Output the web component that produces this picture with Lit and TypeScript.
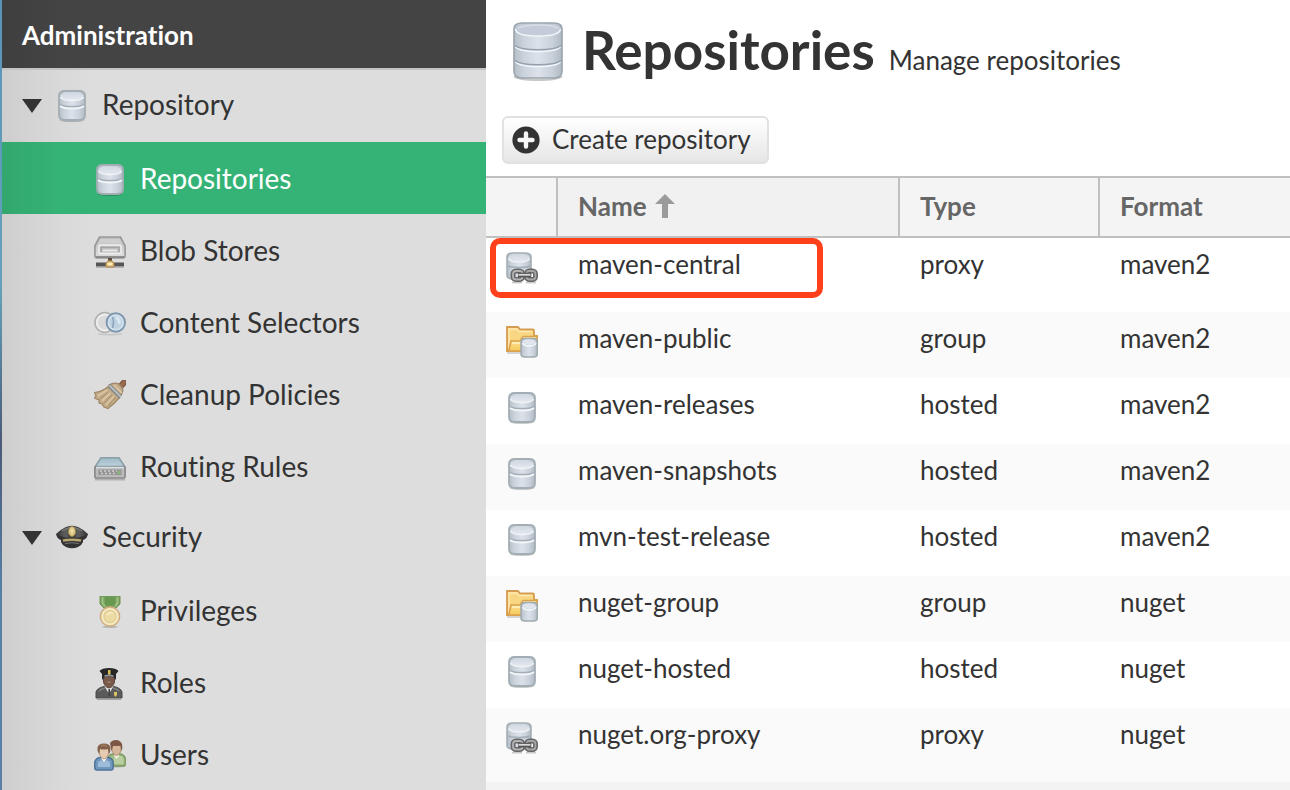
import { LitElement, html, css, svg, nothing, TemplateResult } from "lit";
import { customElement, property, state } from "lit/decorators.js";

type IconName =
  | "database" | "database-large" | "proxy" | "group" | "drive" | "selectors"
  | "broom" | "router" | "cap" | "medal" | "officer" | "users" | "plus" | "sort";

const metal = svg`
  <linearGradient id="metal" x1="0" x2="1" y1="0" y2="0">
    <stop offset="0" stop-color="#b4bfc8"/><stop offset=".2" stop-color="#cad2db"/>
    <stop offset=".5" stop-color="#dce2ea"/><stop offset=".8" stop-color="#c8d0da"/>
    <stop offset="1" stop-color="#b0bac3"/>
  </linearGradient>
  <linearGradient id="lid" x1="0" x2="0" y1="0" y2="1">
    <stop offset="0" stop-color="#d0d7e0"/><stop offset="1" stop-color="#e3e8ee"/>
  </linearGradient>`;

const glyphs: Record<IconName, TemplateResult> = {
  database: svg`
    <defs>${metal}</defs>
    <path d="M4 29.500Q6 31.400 16 31.400T28 29.500" fill="none" stroke="#000" stroke-opacity=".2" stroke-width="1.400"/>
    <path d="M3 6Q3 1 9 1H23Q29 1 29 6V25Q29 30 23 30H9Q3 30 3 25Z" fill="url(#metal)" stroke="#a3aeb4" stroke-width="1.800"/>
    <ellipse cx="16" cy="6" rx="11.500" ry="4" fill="url(#lid)"/>
    <path d="M4.500 7Q6 10.500 16 10.500T27.500 7" fill="none" stroke="#eff2f6" stroke-width="1.800"/>
    <path d="M3.500 14Q6 16.600 16 16.600T28.500 14" fill="none" stroke="#a3aeb8" stroke-width="1.600"/>
    <path d="M4 16Q7 18.500 16 18.500T28 16" fill="none" stroke="#f2f5f8" stroke-width="1.800"/>`,
  "database-large": svg`
    <defs>${metal}</defs>
    <path d="M6 56Q10 60 30 60T54 56" fill="none" stroke="#000" stroke-opacity=".22" stroke-width="2"/>
    <path d="M6 9Q6 3 14 3H46Q54 3 54 9V51Q54 58 46 58H14Q6 58 6 51Z" fill="url(#metal)" stroke="#99a4ad" stroke-width="1.600"/>
    <path d="M7.500 9Q9 4 16 4H44Q51 4 52.500 9Q52 16 30 16T7.500 9Z" fill="#c3cbd8"/>
    <path d="M10 8Q16 5 30 5T50 8" fill="none" stroke="#d8dee6" stroke-width="1.400"/>
    <path d="M7.500 9Q8 16 30 16T52.500 9M7.500 27Q12 31.500 30 31.500T52.500 27M7.500 42Q12 46.500 30 46.500T52.500 42" fill="none" stroke="#f3f6fa" stroke-width="1.600"/>
    <path d="M7 25.500Q12 29.800 30 29.800T53 25.500M7 40.500Q12 44.800 30 44.800T53 40.500" fill="none" stroke="#95a0ac" stroke-width="1.500"/>`,
  proxy: svg`
    <defs>${metal}</defs>
    <path d="M1 5Q1 1 7 1H19Q25 1 25 5V23Q25 27 19 27H7Q1 27 1 23Z" fill="url(#metal)" stroke="#a3aeb4" stroke-width="1.600"/>
    <ellipse cx="13" cy="5.500" rx="10.500" ry="3.600" fill="url(#lid)"/>
    <path d="M2.500 6.500Q4 10 13 10T23.500 6.500" fill="none" stroke="#eff2f6" stroke-width="1.600"/>
    <path d="M2 14Q5 15.500 13 15.500T24 14" fill="none" stroke="#a3aeb8" stroke-width="1.400"/>
    <path d="M6 30.800H16M20 30.800H30" stroke="#000" stroke-opacity=".2" stroke-width="1.600"/>
    <g fill="none">
      <rect x="7" y="19" width="9.500" height="8.500" rx="3" stroke="#666" stroke-width="5"/>
      <rect x="20.500" y="19" width="9" height="8.500" rx="3" stroke="#666" stroke-width="5"/>
      <rect x="7" y="19" width="9.500" height="8.500" rx="3" stroke="#b2b2b2" stroke-width="1.800"/>
      <rect x="20.500" y="19" width="9" height="8.500" rx="3" stroke="#a6a6a6" stroke-width="1.800"/>
      <path d="M12 23H25" stroke="#555" stroke-width="4.600"/>
      <path d="M12.500 22.800H24.500" stroke="#d9d9d9" stroke-width="1.800"/>
    </g>`,
  group: svg`
    <defs>${metal}
      <linearGradient id="paper" x1="0" x2="0" y1="0" y2="1"><stop offset="0" stop-color="#ffe9a3"/><stop offset="1" stop-color="#f5c95c"/></linearGradient>
    </defs>
    <path d="M1 27H16" stroke="#000" stroke-opacity=".15" stroke-width="2"/>
    <path d="M1 25V1H12L14 3.500H26.500Q28 3.500 28 5V10H31V14L28 25Z" fill="#f8d682" stroke="#d59b50" stroke-width="1.800"/>
    <path d="M3 22V3H11L13 5.500H26" fill="none" stroke="#fdeab2" stroke-width="1.400"/>
    <path d="M3 24L5 15H14L17 10.500H31V14L28 25H3Z" fill="url(#paper)" stroke="#dba24e" stroke-width="1.600"/>
    <path d="M6 17H15L18 12.500H29" fill="none" stroke="#fff3c5" stroke-width="1.400"/>
    <path d="M15 16Q15 12.500 19 12.500H27Q31.300 12.500 31.300 16V28Q31.300 31 27 31H19Q15 31 15 28Z" fill="url(#metal)" stroke="#9fa9ae" stroke-width="1.500"/>
    <ellipse cx="23.200" cy="16" rx="6.500" ry="2.500" fill="#dfe5ed"/>
    <path d="M16.500 17Q17.500 20 23.200 20T30 17" fill="none" stroke="#f3f6f9" stroke-width="1.500"/>`,
  drive: svg`
    <defs><linearGradient id="case" x1="0" x2="0" y1="0" y2="1"><stop offset="0" stop-color="#bdbdbd"/><stop offset="1" stop-color="#dedede"/></linearGradient></defs>
    <path d="M.900 10L5.500 1H26.500L31.100 10V19Q31.100 22 29 22H3Q.900 22 .900 19Z" fill="url(#case)" stroke="#999" stroke-width="1.700"/>
    <path d="M4 7L7 3H25L28 7Z" fill="#cfcfcf"/>
    <path d="M2 21H30" stroke="#858585" stroke-width="1.800"/>
    <rect x="5" y="9" width="22" height="8.500" rx="1" fill="#c6c6c6" stroke="#f0f0f0" stroke-width="1.400"/>
    <path d="M7 16V11.500H25V16" fill="none" stroke="#a3a3a3" stroke-width="1.400"/>
    <path d="M9 14.500H23" stroke="#ebebeb" stroke-width="1.500"/>
    <path d="M16 22V27" stroke="#5a5040" stroke-width="4"/>
    <path d="M2 28.500H30" stroke="#555" stroke-width="4"/><path d="M2 31H30" stroke="#9a9a9a" stroke-width="1.200"/>
    <path d="M12 31V27L14 25H18L20 27V31Z" fill="#e6c384" stroke="#aa8348" stroke-width="1"/><path d="M14 27H18V29H14Z" fill="#fff0c4"/>`,
  selectors: svg`
    <circle cx="10.800" cy="14.500" r="9.800" fill="#dadada" stroke="#b2b2b2" stroke-width="1.800"/>
    <circle cx="10.800" cy="14.500" r="8" fill="none" stroke="#efefef" stroke-width="1.800"/>
    <circle cx="21.800" cy="14.500" r="9.200" fill="#bdd1e0" stroke="#7f98b0" stroke-width="2"/>
    <circle cx="21.800" cy="14.500" r="7.300" fill="none" stroke="#d3e2ec" stroke-width="1.600"/>
    <path d="M18.500 9Q20.500 14 18.500 20" fill="none" stroke="#8ba4bb" stroke-width="1.600"/>
    <path d="M22 9.500Q25.500 11 25.500 16" fill="none" stroke="#d9e8f2" stroke-width="3"/>
    <path d="M4 26Q16 27.500 28 26" fill="none" stroke="#000" stroke-opacity=".1" stroke-width="1.400"/>`,
  broom: svg`
    <path d="M24 5.500L29 0H32V4L27.500 9Z" fill="#9a6b50" stroke="#7d5743" stroke-width="1.200"/>
    <path d="M15 5Q20 2 25 4L28.500 8Q30 12 25 18Z" fill="#c2aa88" stroke="#9b8467" stroke-width="1.200"/>
    <path d="M15 6Q8 12 .500 12.500L2 16L.500 18L5 20L5 23L8 24L10 27L14 28.500Q20 24 26 17Z" fill="#c4ad89" stroke="#a08767" stroke-width="1.200"/>
    <path d="M13 10L4 16M16 13L8 21M20 16L12 25" fill="none" stroke="#d9c4a1" stroke-width="1.800"/>
    <path d="M14.500 12L6 18.500M18 15L9.500 23.500M22 17L14 26" fill="none" stroke="#a38b69" stroke-width="1"/>
    <path d="M15 5.500L26.500 17" stroke="#868a8c" stroke-width="4"/><path d="M15.500 5.500L27 17" stroke="#c3c7c7" stroke-width="1.600"/>
    <path d="M20 5L28 13" stroke="#ddc7a6" stroke-width="1.600"/>`,
  router: svg`
    <defs><linearGradient id="top" x1="0" x2="0" y1="0" y2="1"><stop offset="0" stop-color="#9fb9c5"/><stop offset="1" stop-color="#c3dae7"/></linearGradient></defs>
    <path d="M.900 27.500H31.100" stroke="#000" stroke-opacity=".2" stroke-width="2"/>
    <path d="M1 15L7 5.700H25L31 15V17H1Z" fill="url(#top)" stroke="#8a9ea6" stroke-width="1.600"/>
    <rect x=".900" y="14.500" width="30.200" height="11.500" rx="1.500" fill="#bbb" stroke="#8a8a8a" stroke-width="1.700"/>
    <path d="M2 15.500H30" stroke="#d5e1e8" stroke-width="1.500"/>
    <rect x="4.500" y="17.500" width="23" height="5.500" fill="#949494"/>
    <path d="M6 19H23M7 21.500H22" stroke="#d0d0d0" stroke-width="1.300" stroke-dasharray="2 2"/>
    <circle cx="25" cy="20.500" r="1.800" fill="#86b67a"/>`,
  cap: svg`
    <defs><linearGradient id="felt" x1="0" x2="1" y1="0" y2="0"><stop offset="0" stop-color="#3d3d3d"/><stop offset=".3" stop-color="#606060"/><stop offset=".5" stop-color="#2a2a2a"/><stop offset=".7" stop-color="#606060"/><stop offset="1" stop-color="#3d3d3d"/></linearGradient></defs>
    <path d="M0 12Q4 8 9 5.500Q16 2 23 5.500Q28 8 32 12Q31 17 27 18V20Q26 23 22 25Q16 27.500 10 25Q6 23 5 20V18Q1 17 0 12Z" fill="#333"/>
    <path d="M1.500 12Q9 5.500 16 5.500T30.500 12Q26 16 16 16T1.500 12Z" fill="url(#felt)"/>
    <path d="M6 9Q9 6.500 14 5.500M26 9Q23 6.500 18 5.500" fill="none" stroke="#7b7b7b" stroke-width="1.500"/>
    <path d="M7 18.500Q16 17 25 18.500" fill="none" stroke="#b9a56e" stroke-width="2.400"/>
    <path d="M9 21.500Q16 20 23 21.500" fill="none" stroke="#777" stroke-width="1"/>
    <ellipse cx="16" cy="9.500" rx="3.600" ry="5" fill="#dbc684" stroke="#9a864e" stroke-width="1"/><ellipse cx="16" cy="9" rx="1.600" ry="2.500" fill="#eadba0"/>`,
  medal: svg`
    <path d="M6 0H26V8L22 12H10L6 8Z" fill="#7ba260" stroke="#6b9453" stroke-width="1"/>
    <path d="M11 1H21V9L19 11H13L11 9Z" fill="#679a50"/><path d="M8.500 1V7L11 10.500M23.500 1V7L21 10.500" fill="none" stroke="#a0c286" stroke-width="1.800"/>
    <ellipse cx="16" cy="30.800" rx="8" ry="1.200" fill="#000" fill-opacity=".17"/>
    <circle cx="16" cy="20.500" r="9.600" fill="#f5ebc2" stroke="#d0ad80" stroke-width="1.600"/>
    <circle cx="16" cy="20.500" r="6" fill="#ecdca3" stroke="#e2cc94" stroke-width="1.300"/>
    <path d="M13 19Q15 16 19 17" fill="none" stroke="#f6eac0" stroke-width="2"/>`,
  officer: svg`
    <path d="M2 30V24Q3 20 10 18.500H20Q27 20 28 24V30Z" fill="#5b5b5b" stroke="#494949" stroke-width="1"/>
    <path d="M3 31H27" stroke="#999" stroke-width="1.800"/><path d="M5 23Q7 21 11 20M25 23Q23 21 19 20" fill="none" stroke="#808080" stroke-width="1.400"/>
    <path d="M10.500 18L15 26L19.500 18Z" fill="#ededed"/><path d="M14.500 21H16L16.500 27L15.300 29L14 27Z" fill="#444"/>
    <path d="M9.500 8H20.500V14Q19 19.500 15 20Q11 19.500 9.500 14Z" fill="#79594a" stroke="#5f473d" stroke-width="1"/>
    <path d="M13 14H17" stroke="#94705f" stroke-width="2"/>
    <path d="M5.500 3Q8 0 15 0T24.500 3L22 6V12L20 9.500Q15 7.500 10 9.500L8 12V6Z" fill="#272727"/>
    <path d="M10.500 8.300Q15 6.500 19.500 8.300" fill="none" stroke="#8f9699" stroke-width="1.600"/>
    <path d="M14 2H16.500V6L15.300 7L14 6Z" fill="#d8bf57"/><path d="M20 24H23V27L21.500 29L20 27Z" fill="#dac25f"/>`,
  users: svg`
    <ellipse cx="23" cy="26" rx="8" ry="1.500" fill="#000" fill-opacity=".2"/>
    <path d="M14 25V18Q15 14.500 19 14H26Q30 14.500 31.200 18V25Q31 26 29 26H14Z" fill="#a0bc83" stroke="#7a9962" stroke-width="1.400"/>
    <path d="M20 16H27Q29 17 29.500 19V24H20Z" fill="#bbd0a2"/><path d="M20 15L22.500 19L25.500 15Z" fill="#f6f2e9"/>
    <path d="M18 4H27V11Q25 15.500 22.500 15.500T18 11Z" fill="#d7b79b" stroke="#b08d75" stroke-width="1"/>
    <path d="M16 3Q18 0 22 0T28 4Q29 8 27.500 11L26.500 6H19L17.500 11Z" fill="#7d5745"/>
    <path d="M.800 28V22Q2 18 6 17.500H14Q18 18 19.200 22V28Q19 30 17 30H3Q.800 30 .800 28Z" fill="#7299bd" stroke="#4f7499" stroke-width="1.500"/>
    <path d="M4 27V23Q5 20.500 7 20.500H13Q15.500 20.500 16 23V27Z" fill="#9dbcd7"/><path d="M7 18L10 22L13 18Z" fill="#fff"/>
    <path d="M5.500 8H14.500V14Q13 19 10 19T5.500 14Z" fill="#e5cbb0" stroke="#b9977b" stroke-width="1"/>
    <path d="M3.500 8Q4 3.500 10 3.500T16.500 8Q16.500 12 15 14L14 9Q10 10 6 9L5 14Q3 11 3.500 8Z" fill="#83614a"/><path d="M7 6Q10 4.500 13 6.500" fill="none" stroke="#a07c5e" stroke-width="1.500"/>`,
  plus: svg`<circle cx="14" cy="14" r="13.600" fill="#333"/><path d="M14 7.500V20.500M7.500 14H20.500" stroke="#f7f7f7" stroke-width="4.400" stroke-linecap="round"/>`,
  sort: svg`<path d="M10 0L20 10H13V24H7V10H0Z" fill="#9b9b9b"/>`,
};

const boxes: Partial<Record<IconName, [number, number]>> = {
  "database-large": [60, 62],
  plus: [28, 28],
  sort: [20, 24],
};

@customElement("app-icon")
export class AppIcon extends LitElement {
  static styles = css`
    :host { display: inline-flex; flex: none; }
    .glyph { display: block; }
  `;
  @property() name: IconName = "database";
  render() {
    const [w, h] = boxes[this.name] ?? [32, 32];
    return html`<svg class="glyph" width=${w} height=${h} viewBox="0 0 ${w} ${h}" aria-hidden="true">${glyphs[this.name]}</svg>`;
  }
}

interface NavGroup { label: string; icon: IconName; items: { label: string; icon: IconName }[]; }

const navigation: NavGroup[] = [
  { label: "Repository", icon: "database", items: [
    { label: "Repositories", icon: "database" },
    { label: "Blob Stores", icon: "drive" },
    { label: "Content Selectors", icon: "selectors" },
    { label: "Cleanup Policies", icon: "broom" },
    { label: "Routing Rules", icon: "router" },
  ] },
  { label: "Security", icon: "cap", items: [
    { label: "Privileges", icon: "medal" },
    { label: "Roles", icon: "officer" },
    { label: "Users", icon: "users" },
  ] },
];

@customElement("admin-nav")
export class AdminNav extends LitElement {
  static styles = css`
    :host {
      display: block;
      color: #333;
      background: #ddd;
      border-left: 2px solid #5b83a8;
      border-image: linear-gradient(#5b93b8, #64a2bb 36%, #4a5a78 56%, #5680a6 75%, #5a80a8) 1;
    }
    .shade {
      min-height: 100%;
      background: linear-gradient(90deg, rgba(0, 0, 0, .07), rgba(0, 0, 0, .03) 40px, transparent 92px);
    }
    .title {
      margin: 0 0 2px;
      height: 68px;
      padding: 2px 20px 0;
      display: flex;
      align-items: center;
      box-sizing: border-box;
      background: linear-gradient(90deg, #3f3f3f, #444 60px);
      color: #fff;
      font-size: 26px;
      line-height: 32px;
      font-weight: 700;
      box-shadow: 0 2px 0 #c3c3c3;
    }
    .list { list-style: none; margin: 0; padding: 0; }
    .group, .item {
      box-sizing: border-box;
      width: 100%;
      height: 72px;
      display: flex;
      align-items: center;
      border: 0;
      background: none;
      color: inherit;
      font: inherit;
      font-size: 28px;
      line-height: 32px;
      text-align: left;
      text-decoration: none;
      cursor: pointer;
    }
    .group { padding: 0 20px; gap: 14px; }
    .item { padding: 4px 20px 0 92px; gap: 14px; }
    .label { padding-bottom: 4px; }
    .arrow { width: 20px; height: 14px; flex: none; }
    .selected {
      color: #fff;
      background: linear-gradient(90deg, #32a76e, #35b377 60px);
    }
  `;
  @state() private closed = new Set<string>();
  private toggle(label: string) {
    const next = new Set(this.closed);
    if (!next.delete(label)) next.add(label);
    this.closed = next;
  }
  render() {
    return html`<nav class="shade" aria-label="Administration">
      <h2 class="title">Administration</h2>
      <ul class="list">
        ${navigation.map((g) => html`<li>
          <button class="group" aria-expanded=${!this.closed.has(g.label)} @click=${() => this.toggle(g.label)}>
            <svg class="arrow" viewBox="0 0 20 14" aria-hidden="true"><path d="M0 0H20L10 14Z" fill="#333"/></svg>
            <app-icon name=${g.icon}></app-icon><span class="label">${g.label}</span>
          </button>
          ${this.closed.has(g.label) ? nothing : html`<ul class="list">
            ${g.items.map((i) => html`<li><a href="#" class="item ${i.label === "Repositories" ? "selected" : ""}"
              aria-current=${i.label === "Repositories" ? "page" : nothing}><app-icon name=${i.icon}></app-icon><span class="label">${i.label}</span></a></li>`)}
          </ul>`}
        </li>`)}
      </ul>
    </nav>`;
  }
}

const repositories: [string, "proxy" | "group" | "hosted", string][] = [
  ["maven-central", "proxy", "maven2"],
  ["maven-public", "group", "maven2"],
  ["maven-releases", "hosted", "maven2"],
  ["maven-snapshots", "hosted", "maven2"],
  ["mvn-test-release", "hosted", "maven2"],
  ["nuget-group", "group", "nuget"],
  ["nuget-hosted", "hosted", "nuget"],
  ["nuget.org-proxy", "proxy", "nuget"],
];

@customElement("repository-table")
export class RepositoryTable extends LitElement {
  static styles = css`
    :host { display: block; }
    .table {
      width: 100%;
      table-layout: fixed;
      border-collapse: separate;
      border-spacing: 0;
      font-size: 26px;
      line-height: 32px;
    }
    .c-icon { width: 72px; }
    .c-name { width: 342px; }
    .c-type { width: 200px; }
    .head {
      height: 56px;
      padding: 0 20px 2px;
      background: #f4f4f4;
      border-top: 2px solid #c0c0c0;
      border-bottom: 2px solid #c0c0c0;
      border-right: 2px solid #c0c0c0;
      color: #666;
      font-weight: 700;
      text-align: left;
    }
    .head:last-child { border-right: 0; }
    .sorted { background: #f1f1f1; }
    .sort {
      display: flex;
      align-items: center;
      gap: 8px;
      padding: 0;
      border: 0;
      background: none;
      color: inherit;
      font: inherit;
    }
    .cell { height: 56px; padding: 10px 20px 0; vertical-align: top; color: #333; white-space: nowrap; }
    .cell:first-child { position: relative; padding-top: 14px; height: 52px; }
    .row:nth-child(even) { background: #fafafa; }
    .row:first-child .cell, .row:last-child .cell { padding-bottom: 8px; }
    .mark {
      position: absolute;
      z-index: 1;
      left: 4px;
      top: 0;
      width: 333px;
      height: 60px;
      box-sizing: border-box;
      border: 6px solid #ff401a;
      border-radius: 10px;
      pointer-events: none;
    }
  `;
  render() {
    return html`<table class="table">
      <colgroup><col class="c-icon"><col class="c-name"><col class="c-type"><col></colgroup>
      <thead><tr>
        <th class="head" scope="col" aria-label="Kind"></th>
        <th class="head sorted" scope="col" aria-sort="ascending"><button class="sort">Name <app-icon name="sort"></app-icon></button></th>
        <th class="head" scope="col">Type</th>
        <th class="head" scope="col">Format</th>
      </tr></thead>
      <tbody>
        ${repositories.map(([name, type, format], i) => html`<tr class="row">
          <td class="cell"><app-icon name=${type === "hosted" ? "database" : type}></app-icon>${i === 0 ? html`<span class="mark"></span>` : nothing}</td>
          <td class="cell">${name}</td><td class="cell">${type}</td><td class="cell">${format}</td>
        </tr>`)}
      </tbody>
    </table>`;
  }
}

@customElement("app-root")
export class AppRoot extends LitElement {
  static styles = css`
    :host {
      display: flex;
      min-height: 100vh;
      font-family: Lato, "Open Sans", sans-serif;
      font-variant-ligatures: none;
      color: #333;
      background: #fff;
    }
    .side { flex: 0 0 486px; box-sizing: border-box; }
    .main { flex: 1; min-width: 0; display: flex; flex-direction: column; background: #f3f3f3; }
    .top { background: #fff; padding: 20px 22px 12px; }
    .heading { display: flex; align-items: center; gap: 14px; height: 62px; }
    .words { display: flex; align-items: baseline; gap: 14px; padding-bottom: 2px; white-space: nowrap; }
    .h1 { margin: 0; font-size: 53px; line-height: 60px; font-weight: 700; }
    .sub { margin: 0; font-size: 26px; line-height: 32px; }
    .bar { display: flex; margin-top: 34px; margin-left: -6px; }
    .create {
      display: flex;
      align-items: center;
      gap: 12px;
      height: 48px;
      padding: 0 16px 0 8px;
      border: 2px solid #e1e1e1;
      border-radius: 6px;
      background: linear-gradient(#fff, #e6e6e6);
      color: #333;
      font: inherit;
      font-size: 26px;
      line-height: 32px;
      font-variant-ligatures: inherit;
    }
    .text { padding-bottom: 2px; }
    .grid { background: #fff; }
  `;
  render() {
    return html`
      <admin-nav class="side"></admin-nav>
      <main class="main">
        <div class="top">
          <header class="heading">
            <app-icon name="database-large"></app-icon>
            <div class="words"><h1 class="h1">Repositories</h1><p class="sub">Manage repositories</p></div>
          </header>
          <div class="bar"><button class="create"><app-icon name="plus"></app-icon><span class="text">Create repository</span></button></div>
        </div>
        <repository-table class="grid"></repository-table>
      </main>`;
  }
}
